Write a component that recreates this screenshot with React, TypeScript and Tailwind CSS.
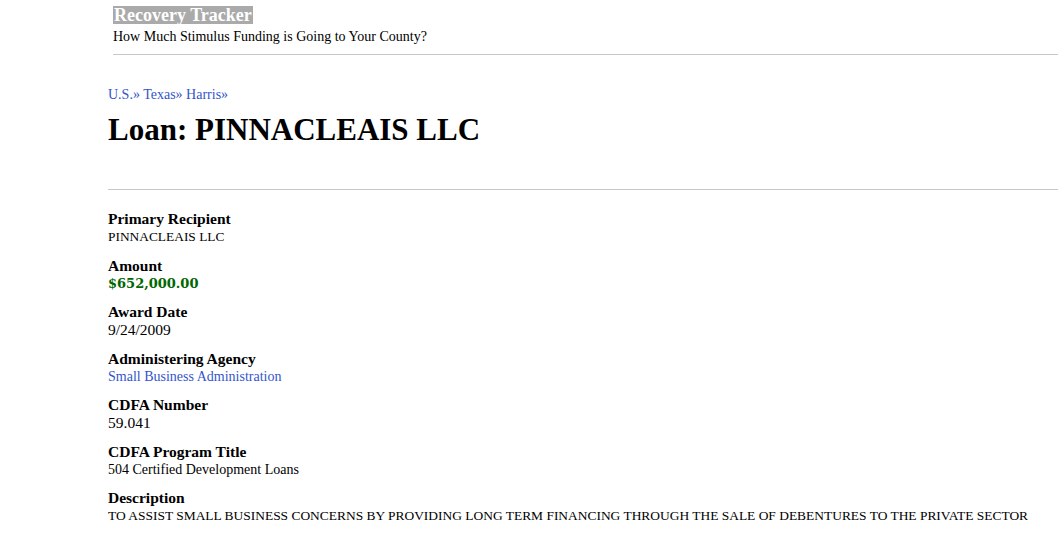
import React from "react";

const times = "font-['Liberation_Serif',serif]";

function Field({ label, value, cls }: { label: string; value: string; cls: string }) {
  return (
    <div className="mb-[10.5px]">
      <div className={`${times} font-bold text-[15.5px] leading-[18px] h-[18px] text-black`}>{label}</div>
      <div className={`leading-[18px] h-[18px] whitespace-nowrap ${cls}`}>{value}</div>
    </div>
  );
}

export default function App() {
  return (
    <div className="bg-white min-h-[541px] w-[1058px] overflow-hidden">
      <div className="pl-[113px] pt-[6px]">
        <div className="w-fit bg-[#aaaaaa] px-[1px] h-[18px]">
          <span className={`${times} font-bold text-white text-[18px] leading-[18px] block`}>Recovery Tracker</span>
        </div>
        <div className={`${times} text-[14px] leading-[18px] text-black mt-[4px]`}>
          How Much Stimulus Funding is Going to Your County?
        </div>
        <div className="h-[1px] bg-[#c8c8c8] mt-[8px]" />
      </div>
      <div className="pl-[108px]">
        <div className={`${times} text-[14px] leading-[18px] mt-[31px] text-[#3355cc]`}>
          U.S.» Texas» Harris»
        </div>
        <h1 className={`${times} font-bold text-[31px] leading-[40px] text-black mt-[6px]`}>
          Loan: PINNACLEAIS LLC
        </h1>
        <div className="h-[1px] bg-[#c8c8c8] mt-[39px]" />
        <div className="mt-[20px]">
          <Field label="Primary Recipient" value="PINNACLEAIS LLC" cls={`${times} text-black text-[13.4px]`} />
          <Field label="Amount" value="$652,000.00" cls="font-['DejaVu_Serif',serif] font-bold text-[#006600] text-[13px]" />
          <Field label="Award Date" value="9/24/2009" cls={`${times} text-black text-[15.5px]`} />
          <Field label="Administering Agency" value="Small Business Administration" cls={`${times} text-[#3355cc] text-[14px]`} />
          <Field label="CDFA Number" value="59.041" cls={`${times} text-black text-[15.5px]`} />
          <Field label="CDFA Program Title" value="504 Certified Development Loans" cls={`${times} text-black text-[14px]`} />
          <Field
            label="Description"
            value="TO ASSIST SMALL BUSINESS CONCERNS BY PROVIDING LONG TERM FINANCING THROUGH THE SALE OF DEBENTURES TO THE PRIVATE SECTOR"
            cls={`${times} text-black text-[13.45px]`}
          />
        </div>
      </div>
    </div>
  );
}
